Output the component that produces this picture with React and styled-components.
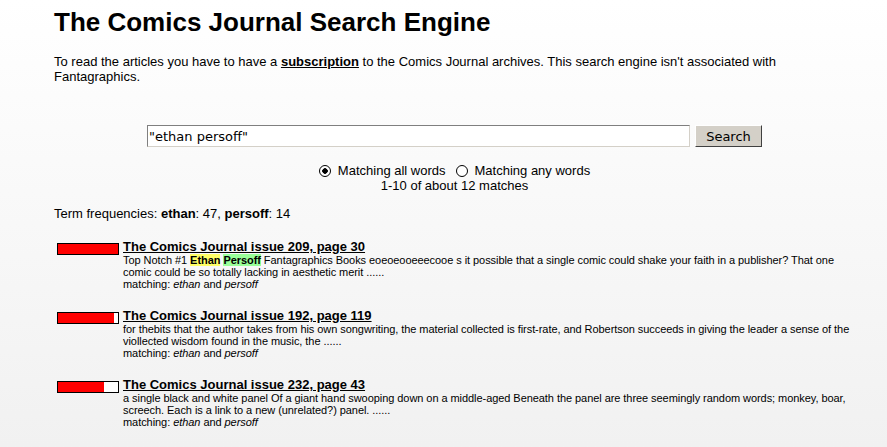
import React from 'react';
import styled, { createGlobalStyle } from 'styled-components';

const GlobalStyle = createGlobalStyle`
  html, body {
    margin: 0;
    padding: 0;
  }
  body {
    width: 887px;
    height: 447px;
    overflow: hidden;
    background: linear-gradient(#ffffff, #f1f1f1);
    font-family: 'Liberation Sans', Arial, sans-serif;
    color: #000;
  }
`;

const results = [
  {
    title: 'The Comics Journal issue 209, page 30',
    score: 100,
    snippet: [
      'Top Notch #1 ',
      { text: 'Ethan', color: '#ffff66' },
      ' ',
      { text: 'Persoff', color: '#99ff99' },
      ' Fantagraphics Books eoeoeooeeecooe s it possible that a single comic could shake your faith in a publisher? That one comic could be so totally lacking in aesthetic merit ......',
    ],
  },
  {
    title: 'The Comics Journal issue 192, page 119',
    score: 93,
    snippet: [
      'for thebits that the author takes from his own songwriting, the material collected is first-rate, and Robertson succeeds in giving the leader a sense of the viollected wisdom found in the music, the ......',
    ],
  },
  {
    title: 'The Comics Journal issue 232, page 43',
    score: 77,
    snippet: [
      'a single black and white panel Of a giant hand swooping down on a middle-aged Beneath the panel are three seemingly random words; monkey, boar, screech. Each is a link to a new (unrelated?) panel. ......',
    ],
  },
];

const App = () => (
  <Page>
    <GlobalStyle />
    <Title>The Comics Journal Search Engine</Title>
    <Intro>
      To read the articles you have to have a <IntroLink href="#">subscription</IntroLink> to the Comics Journal archives. This search engine isn't associated with Fantagraphics.
    </Intro>

    <SearchForm onSubmit={e => e.preventDefault()}>
      <SearchRow>
        <SearchInput defaultValue={'"ethan persoff"'} />
        <SearchButton type="submit">Search</SearchButton>
      </SearchRow>
      <Options>
        <Option>
          <Radio checked />
          Matching all words
        </Option>
        <Option>
          <Radio />
          Matching any words
        </Option>
      </Options>
      <Summary>1-10 of about 12 matches</Summary>
    </SearchForm>

    <Frequencies>
      Term frequencies: <b>ethan</b>: 47, <b>persoff</b>: 14
    </Frequencies>

    <ResultList>
      {results.map(r => (
        <Result key={r.title}>
          <Bar>
            <BarFill style={{ width: `${r.score}%` }} />
          </Bar>
          <ResultBody>
            <ResultTitle href="#">{r.title}</ResultTitle>
            <Snippet>
              {r.snippet.map((part, i) =>
                typeof part === 'string'
                  ? <React.Fragment key={i}>{part}</React.Fragment>
                  : <Hit key={i} color={part.color}>{part.text}</Hit>
              )}
            </Snippet>
            <Matching>
              matching: <i>ethan</i> and <i>persoff</i>
            </Matching>
          </ResultBody>
        </Result>
      ))}
    </ResultList>
  </Page>
);

export default App;

const Page = styled.div`
  width: 801px;
  padding: 7px 0 0 54px;
`;

const Title = styled.h1`
  margin: 0;
  font-size: 26px;
  line-height: 30px;
  font-weight: bold;
`;

const Intro = styled.p`
  margin: 17px 0 0;
  font-size: 13px;
  line-height: 15px;
  width: 780px;
`;

const IntroLink = styled.a`
  color: #000;
  font-weight: bold;
  text-decoration: underline;
`;

const SearchForm = styled.form`
  margin-top: 41px;
  display: flex;
  flex-direction: column;
  align-items: center;
`;

const SearchRow = styled.div`
  display: flex;
  align-items: center;
  gap: 5px;
`;

const SearchInput = styled.input`
  width: 543px;
  height: 22px;
  box-sizing: border-box;
  border: 1px solid #7f7f7f;
  border-right-color: #d4d0c8;
  border-bottom-color: #d4d0c8;
  background: #fff;
  padding: 0 1px;
  font-family: 'DejaVu Sans', sans-serif;
  font-size: 13px;
  outline: none;
`;

const SearchButton = styled.button`
  width: 67px;
  height: 22px;
  box-sizing: border-box;
  border: 1px solid;
  border-color: #fff #404040 #404040 #fff;
  background: #d4d0c8;
  font-family: 'DejaVu Sans', sans-serif;
  font-size: 13px;
  color: #000;
  padding: 0;
`;

const Options = styled.div`
  margin-top: 16px;
  display: flex;
  gap: 10px;
  font-size: 13px;
  line-height: 15px;
`;

const Option = styled.label`
  display: flex;
  align-items: center;
  gap: 7px;
`;

const Radio = styled.span`
  width: 12px;
  height: 12px;
  box-sizing: border-box;
  border: 1px solid #000;
  border-radius: 50%;
  background: ${p => p.checked ? 'radial-gradient(circle, #000 0 2.5px, #fff 3px)' : '#fff'};
`;

const Summary = styled.div`
  font-size: 13px;
  line-height: 15px;
`;

const Frequencies = styled.div`
  margin-top: 13px;
  font-size: 13px;
  line-height: 15px;
`;

const ResultList = styled.div`
  margin-top: 19px;
  display: flex;
  flex-direction: column;
  gap: 19px;
`;

const Result = styled.div`
  display: flex;
  align-items: flex-start;
  gap: 4px;
`;

const Bar = styled.div`
  flex: none;
  margin: 3px 0 0 3px;
  width: 62px;
  height: 12px;
  box-sizing: border-box;
  border: 1px solid #000;
  background: #fff;
`;

const BarFill = styled.div`
  height: 100%;
  background: #ff0000;
`;

const ResultBody = styled.div`
  flex: 1;
  font-size: 11px;
  line-height: 12px;
  letter-spacing: -0.06px;
`;

const ResultTitle = styled.a`
  display: block;
  color: #000;
  font-size: 13px;
  line-height: 14px;
  font-weight: bold;
  letter-spacing: 0;
  text-decoration: underline;
`;

const Snippet = styled.div``;

const Hit = styled.b`
  background: ${p => p.color};
`;

const Matching = styled.div``;
